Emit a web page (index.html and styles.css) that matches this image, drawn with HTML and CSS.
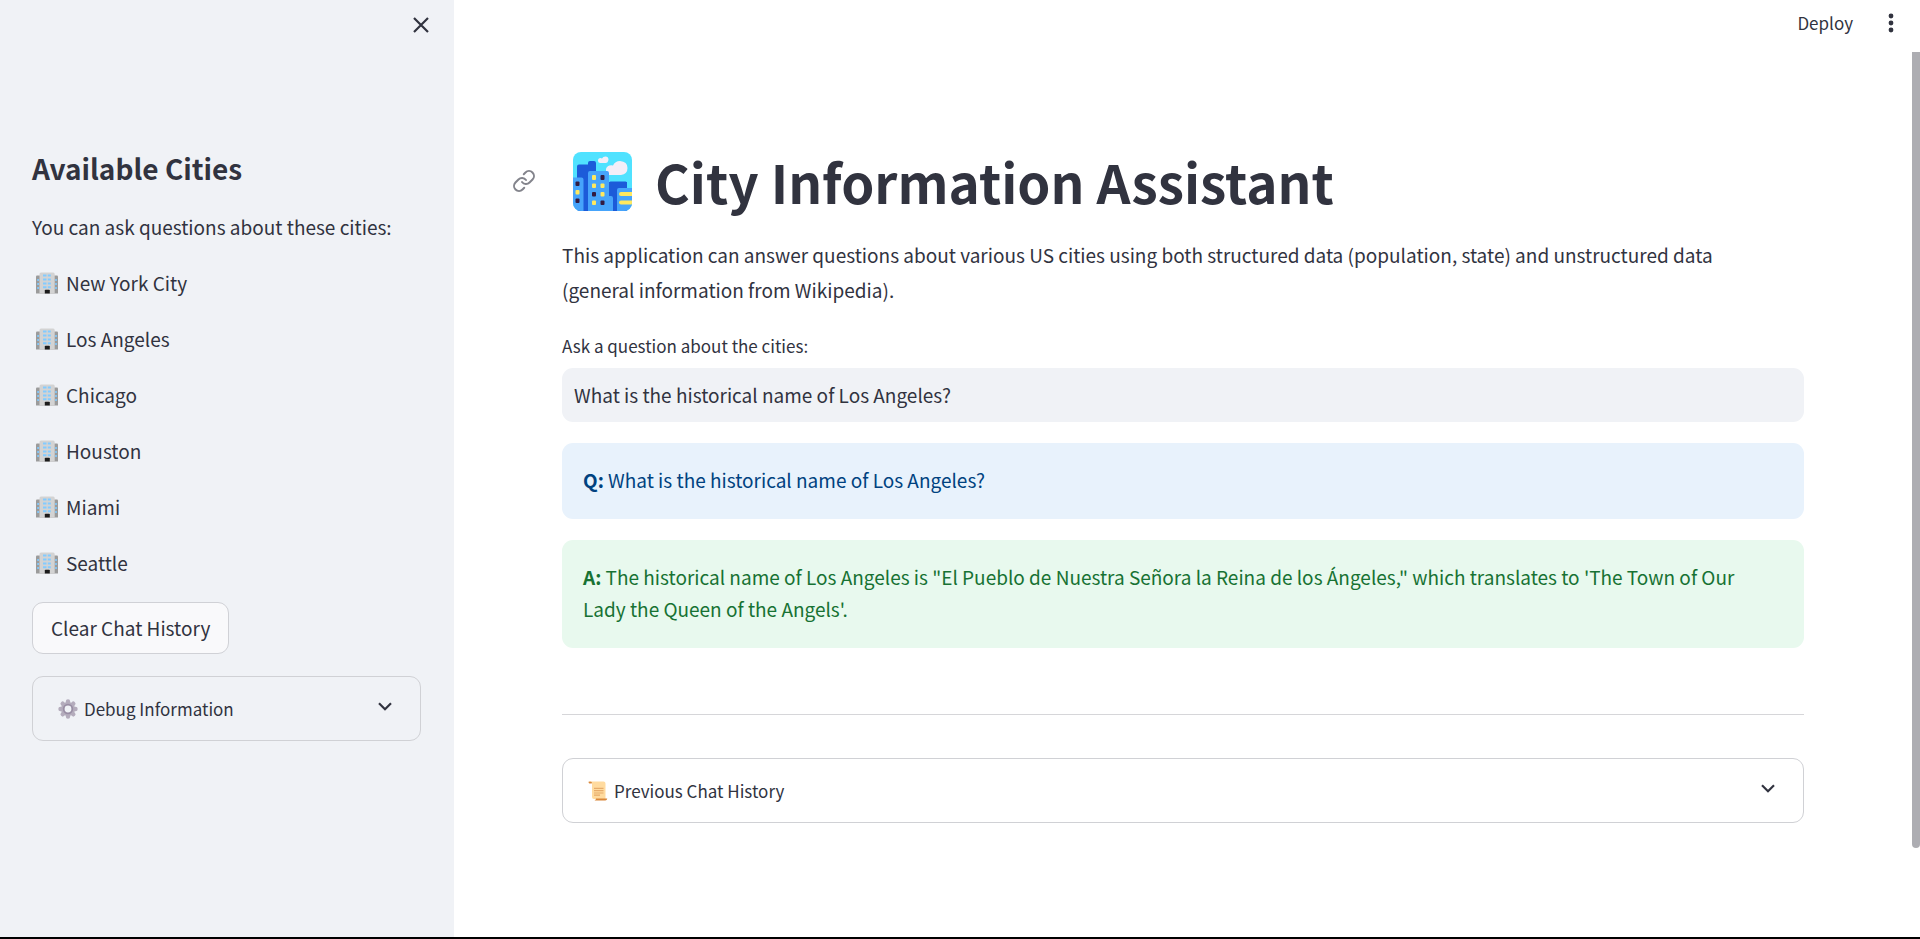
FILE: index.html
```html
<!DOCTYPE html>
<html lang="en">
<head>
<meta charset="utf-8">
<meta name="viewport" content="width=device-width, initial-scale=1">
<title>City Information Assistant</title>
<link rel="stylesheet" href="styles.css">
</head>
<body>
<svg class="defs" aria-hidden="true">
  <symbol id="office" viewBox="0 0 22 22">
    <path fill="#9b9b9b" d="M0 4.500Q0 3.500 1 3.500H21Q22 3.500 22 4.500V21.500H0Z"/>
    <path fill="#d3d3d3" d="M3.500 2Q3.500 .5 5 .5H17.200Q18.700 .5 18.700 2V21.500H3.500Z"/>
    <path fill="#83cbff" d="M7 2.500h3.500v2H7zm4.800 0h3v2h-3zM7 6.500h3.500v2H7zm4.800 0h3v2h-3zM7 10.500h3.500v2H7zm4.800 0h3v2h-3zM7 14.300h3.500v2H7zm4.800 0h3v2h-3zM1.300 7h1.600v2H1.300zm0 4h1.600v2H1.300zm0 4h1.600v2H1.300zM19.200 7h1.600v2h-1.600zm0 4h1.600v2h-1.600zm0 4h1.600v2h-1.600z"/>
    <path fill="#1c1c1c" d="M8.800 18.500q0-.8.8-.8h3.400q.8 0 .8.800v3h-5z"/>
  </symbol>
  <symbol id="chevron" viewBox="0 0 14 9">
    <path d="M1 1.200L7 7.200L13 1.200" fill="none" stroke="#31333f" stroke-width="2.200"/>
  </symbol>
</svg>
<div class="app">
  <aside class="sidebar">
    <button class="icon-button close" type="button" aria-label="Close sidebar">
      <svg width="16" height="16" viewBox="0 0 16 16"><path d="M1 1L15 15M15 1L1 15" stroke="#31333f" stroke-width="2.200" fill="none"/></svg>
    </button>
    <div class="sidebar-content">
      <h2 class="sidebar-title">Available Cities</h2>
      <p class="text">You can ask questions about these cities:</p>
      <p class="text city"><svg class="city-icon"><use href="#office"/></svg>New York City</p>
      <p class="text city"><svg class="city-icon"><use href="#office"/></svg>Los Angeles</p>
      <p class="text city"><svg class="city-icon"><use href="#office"/></svg>Chicago</p>
      <p class="text city"><svg class="city-icon"><use href="#office"/></svg>Houston</p>
      <p class="text city"><svg class="city-icon"><use href="#office"/></svg>Miami</p>
      <p class="text city"><svg class="city-icon"><use href="#office"/></svg>Seattle</p>
      <button class="button" type="button">Clear Chat History</button>
      <details class="expander">
        <summary class="summary">
          <svg class="summary-icon" viewBox="0 0 20 20">
            <g stroke="#b4acbc" stroke-width="4.400" stroke-linecap="round">
              <path d="M10 2.500V17.500M2.500 10H17.500M4.700 4.700L15.300 15.300M15.300 4.700L4.700 15.300"/>
            </g>
            <circle cx="10" cy="10" r="7" fill="#b4acbc"/>
            <circle cx="10" cy="10" r="4.300" fill="#f0f2f6" stroke="#998ea4" stroke-width="1.800"/>
          </svg>
          <span class="summary-label">Debug Information</span>
          <svg class="chevron"><use href="#chevron"/></svg>
        </summary>
      </details>
    </div>
  </aside>
  <div class="page">
    <header class="header">
      <button class="deploy" type="button">Deploy</button>
      <button class="icon-button" type="button" aria-label="Main menu">
        <svg width="6" height="20" viewBox="0 0 6 20"><g fill="#31333f"><circle cx="3" cy="3" r="2.400"/><circle cx="3" cy="10" r="2.400"/><circle cx="3" cy="17" r="2.400"/></g></svg>
      </button>
    </header>
    <main class="main">
      <h1 class="title">
        <a class="anchor" href="#title" aria-label="Link to heading">
          <svg width="24" height="24" viewBox="0 0 24 24" fill="none" stroke="#83848c" stroke-width="2" stroke-linecap="round" stroke-linejoin="round"><path d="M10 13a5 5 0 0 0 7.540.54l3-3a5 5 0 0 0-7.070-7.070l-1.720 1.710"/><path d="M14 11a5 5 0 0 0-7.540-.54l-3 3a5 5 0 0 0 7.070 7.070l1.710-1.710"/></svg>
        </a>
        <svg class="title-icon" viewBox="0 0 59 59">
          <clipPath id="tile"><rect width="59" height="59" rx="8"/></clipPath>
          <g clip-path="url(#tile)">
            <rect width="59" height="59" fill="#50e2ff"/>
            <path fill="#f3eef8" d="M27.500 11Q25 11 25 8.500T27.500 6Q28.500 6 29 6.500Q30 4.500 32.500 4.500Q35.300 4.500 35.500 7.500Q35 11 32.500 11ZM33 23V17Q34.500 12.500 40 13.500Q42 9 47 9Q54.500 9.500 54.500 16Q54.500 22 48 23Z"/>
            <path fill="#1c5bd9" d="M4 14.500Q4 12.500 6 12.500H15V11Q15 9 17 9H21Q23 9 23 11V30H54V59H4ZM36 31Q36 29.500 37.500 29.500H52.500Q54 29.500 54 31V59H36Z"/>
            <path fill="#46a4fb" d="M0 25.500H8.500Q10.500 25.500 10.500 27.500V59H0ZM15 21Q15 19 17 19H34Q36 19 36 21V44H38Q40 44 40 46V59H15ZM44 38Q44 36 46 36H59V59H44Z"/>
            <g fill="#ffe95f"><rect x="19" y="23" width="4" height="5" rx="1"/><rect x="19" y="31.500" width="4" height="4.500" rx="1"/><rect x="27.500" y="31.500" width="4" height="4.500" rx="1"/><rect x="27.500" y="40" width="4" height="4.500" rx="1"/><rect x="19" y="48.500" width="4" height="4.500" rx="1"/><rect x="2.500" y="38" width="4" height="4.500" rx="1"/><rect x="46" y="40" width="15" height="4" rx="2"/><rect x="46" y="48.500" width="15" height="4" rx="2"/></g>
            <g fill="#321b41"><rect x="27.500" y="23" width="4" height="5" rx="1"/><rect x="19" y="40" width="4" height="4.500" rx="1"/><rect x="27.500" y="48.500" width="4" height="4.500" rx="1"/><rect x="2.500" y="29.500" width="4" height="4.500" rx="1"/><rect x="2.500" y="46.500" width="4" height="4.500" rx="1"/></g>
          </g>
        </svg>
        <span id="title">City Information Assistant</span>
      </h1>
      <p class="intro">This application can answer questions about various US cities using both structured data (population, state) and unstructured data (general information from Wikipedia).</p>
      <div class="field">
        <label class="field-label" for="question">Ask a question about the cities:</label>
        <input class="field-input" id="question" type="text" value="What is the historical name of Los Angeles?">
      </div>
      <div class="alert info"><strong>Q:</strong> What is the historical name of Los Angeles?</div>
      <div class="alert success"><strong>A:</strong> The historical name of Los Angeles is "El Pueblo de Nuestra Señora la Reina de los Ángeles," which translates to 'The Town of Our Lady the Queen of the Angels'.</div>
      <hr class="divider">
      <details class="expander">
        <summary class="summary">
          <svg class="summary-icon" viewBox="0 0 20 20">
            <path fill="#ffdb9f" d="M1.500 .5H15.500Q17.500 .5 17.500 2.500V18H6Q4 18 4 16V2Z"/>
            <path fill="#d9883b" d="M.5 .8Q2 0 3.800 1V2.500H1.500Q.5 2.500.5 .8ZM8 17.500H19.300Q19 19.500 17.300 19.500H6.500Q8 19 8 17.500Z"/>
            <path stroke="#e6ab6a" stroke-width="1.200" d="M6 7.300H15.500M6 9.700H15.500M6 12H15.500M6 14.200H12"/>
          </svg>
          <span class="summary-label">Previous Chat History</span>
          <svg class="chevron"><use href="#chevron"/></svg>
        </summary>
      </details>
    </main>
    <div class="scroll-thumb"></div>
  </div>
</div>
</body>
</html>
```
FILE: styles.css
```css
* {
  box-sizing: border-box;
}

body {
  margin: 0;
  color: #31333f;
  background: #fff;
  font-family: "Noto Sans CJK SC", "Noto Sans", sans-serif;
  font-size: 19px;
}

h1, h2, p {
  margin: 0;
}

button, input {
  font: inherit;
  color: inherit;
}

.defs {
  position: absolute;
  width: 0;
  height: 0;
}

.app {
  display: flex;
  min-height: 100vh;
  border-bottom: 2px solid #000;
}

.sidebar {
  flex: 0 0 454px;
  display: flex;
  flex-direction: column;
  padding: 9px 33px 32px 32px;
  background: #f0f2f6;
}

.icon-button {
  display: flex;
  align-items: center;
  justify-content: center;
  width: 32px;
  height: 32px;
  padding: 0;
  border: 0;
  background: none;
}

.close {
  align-self: flex-end;
  margin: 0 -16px 107px 0;
}

.sidebar-content {
  display: flex;
  flex-direction: column;
  align-items: flex-start;
  gap: 22px;
}

.sidebar-title {
  font-size: 28px;
  font-weight: 600;
  line-height: 40px;
}

.text {
  line-height: 34px;
}

.city {
  display: flex;
  align-items: center;
  gap: 8px;
  padding-left: 4px;
}

.city-icon {
  width: 22px;
  height: 22px;
}

.button {
  padding: 8px 18px;
  border: 1px solid #d0d1d6;
  border-radius: 11px;
  background: #f9f9fb;
  line-height: 34px;
}

.expander {
  width: 100%;
  border: 1px solid #d0d1d5;
  border-radius: 11px;
}

.summary {
  display: flex;
  align-items: center;
  padding: 16px 28px 16px 25px;
  font-size: 17px;
  line-height: 31px;
  list-style: none;
}

.summary-icon {
  width: 20px;
  height: 20px;
  margin-right: 6px;
}

.summary-label {
  flex: 1;
}

.chevron {
  width: 14px;
  height: 9px;
  margin-bottom: 4px;
}

.page {
  position: relative;
  flex: 1;
  min-width: 0;
}

.header {
  display: flex;
  align-items: center;
  justify-content: flex-end;
  gap: 22px;
  height: 45px;
  padding-right: 13px;
}

.deploy {
  padding: 0;
  border: 0;
  background: none;
  font-size: 17px;
  line-height: 24px;
}

.main {
  display: flex;
  flex-direction: column;
  gap: 21px;
  padding: 101px 116px 64px 108px;
}

.title {
  display: flex;
  align-items: center;
  font-size: 53px;
  line-height: 70px;
}

.anchor {
  display: flex;
  margin: 0 37px 0 -50px;
}

.title-icon {
  width: 59px;
  height: 59px;
  margin-right: 23px;
}

.intro {
  padding-right: 42px;
  line-height: 35px;
}

.field {
  display: flex;
  flex-direction: column;
  gap: 6px;
  margin-top: 2px;
}

.field-label {
  font-size: 17px;
  line-height: 32px;
}

.field-input {
  width: 100%;
  height: 54px;
  padding: 0 12px 2px;
  border: 0;
  border-radius: 11px;
  background: #f0f2f6;
}

.alert {
  padding: 21px 42px 23px 21px;
  border-radius: 11px;
  line-height: 32px;
}

.info {
  color: #004280;
  background: #e8f2fc;
}

.success {
  color: #177233;
  background: #e8f9ee;
}

.divider {
  width: 100%;
  margin: 45px 0 22px;
  border: 0;
  border-top: 1px solid #d6d6d9;
}

.scroll-thumb {
  position: absolute;
  top: 52px;
  right: 0;
  width: 8px;
  height: 85%;
  border-radius: 0 0 4px 4px;
  background: #adadb2;
}
```
